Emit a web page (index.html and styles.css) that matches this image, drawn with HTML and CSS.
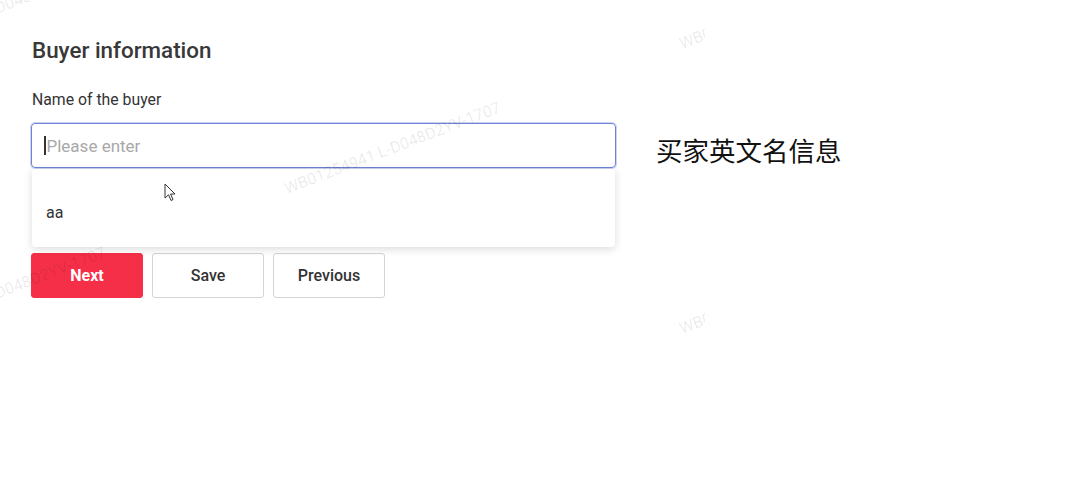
FILE: index.html
```html
<!DOCTYPE html>
<html lang="en">
<head>
  <meta charset="UTF-8" />
  <title>Buyer information</title>
  <link rel="stylesheet" href="styles.css">
</head>
<body>
  <div class="watermarks">
    <span class="wm wm-1">WB01254941 L-D048D2YV-1707</span>
    <span class="wm wm-2">WB01254941 L-D048D2YV-1707</span>
    <span class="wm wm-3">WB01254941 L-D048D2YV-1707</span>
    <span class="wm wm-4">WB01254941 L-D048D2YV-1707</span>
    <span class="wm wm-5">WB01254941 L-D048D2YV-1707</span>
  </div>

  <div class="page">
    <div class="form">
      <h2 class="title">Buyer information</h2>
      <div class="label">Name of the buyer</div>

      <div class="field">
        <div class="input">
          <span class="caret"></span>
          <span class="placeholder">Please enter</span>
        </div>
        <div class="dropdown">
          <div class="option">aa</div>
        </div>
        <svg class="pointer" width="13" height="19" viewBox="0 0 13 19">
          <path d="M1 1 L1 15 L4.5 11.8 L7 17.5 L9 16.6 L6.6 11 L11 11 Z" fill="#fff" stroke="#333" stroke-width="1" stroke-linejoin="round"/>
        </svg>
      </div>

      <div class="actions">
        <button class="btn btn-primary">Next</button>
        <button class="btn">Save</button>
        <button class="btn">Previous</button>
      </div>
    </div>

    <div class="note">买家英文名信息</div>
  </div>
</body>
</html>
```

FILE: styles.css
```css
* {
  box-sizing: border-box;
  margin: 0;
  padding: 0;
}

body {
  font-family: Roboto, 'Noto Sans', sans-serif;
  background: #fff;
  color: #333;
  width: 1084px;
  height: 482px;
  overflow: hidden;
  position: relative;
}

.page {
  display: flex;
  gap: 40px;
  padding: 36px 0 0 31px;
}

.form {
  width: 585px;
  display: flex;
  flex-direction: column;
}

.title {
  font-size: 22.4px;
  line-height: 28px;
  font-weight: 500;
  color: #383838;
  padding-left: 1px;
}

.label {
  margin-top: 26px;
  font-size: 15.8px;
  line-height: 20px;
  color: #333;
  padding-left: 1px;
}

.field {
  position: relative;
  margin-top: 13px;
  margin-bottom: 85px;
}

.input {
  height: 45px;
  border: 1px solid #6f83d6;
  box-shadow: 0 0 0 1px rgba(111, 131, 214, 0.35);
  border-radius: 4px;
  display: flex;
  align-items: center;
  padding-left: 12px;
  gap: 1px;
}

.caret {
  width: 1.5px;
  height: 19px;
  background: #333;
}

.placeholder {
  font-size: 17px;
  color: #a8a8a8;
}

.dropdown {
  position: absolute;
  top: 46px;
  left: 1px;
  right: 1px;
  height: 78px;
  background: #fff;
  border-radius: 4px;
  box-shadow: 0 2px 8px rgba(0, 0, 0, 0.15);
  padding-top: 28px;
}

.option {
  font-size: 16px;
  line-height: 32px;
  color: #333;
  padding-left: 14px;
}

.pointer {
  position: absolute;
  top: 60px;
  left: 133px;
}

.actions {
  display: flex;
  gap: 9px;
}

.btn {
  width: 112px;
  height: 45px;
  border: 1px solid #d4d4d4;
  border-radius: 3px;
  background: #fff;
  font-family: Roboto, sans-serif;
  font-size: 16px;
  font-weight: 500;
  color: #333;
}

.btn-primary {
  background: #f52f48;
  border-color: #f52f48;
  color: #fff;
  font-weight: 700;
}

.note {
  padding-top: 96px;
  font-family: 'Noto Sans CJK SC', sans-serif;
  font-size: 26.5px;
  line-height: 36px;
  color: #111;
}

.watermarks {
  position: absolute;
  top: 0;
  left: 0;
  width: 705px;
  height: 482px;
  overflow: hidden;
  pointer-events: none;
  z-index: 5;
}

.wm {
  position: absolute;
  white-space: nowrap;
  font-family: Roboto, sans-serif;
  font-size: 16px;
  line-height: 16px;
  color: rgba(0, 0, 0, 0.09);
  transform: rotate(-21deg);
  transform-origin: left bottom;
}

.wm-1 { left: 288px; top: 181px; }
.wm-2 { left: -107px; top: 326px; }
.wm-3 { left: -107px; top: 41px; }
.wm-4 { left: 683px; top: 36px; }
.wm-5 { left: 683px; top: 321px; }
```
